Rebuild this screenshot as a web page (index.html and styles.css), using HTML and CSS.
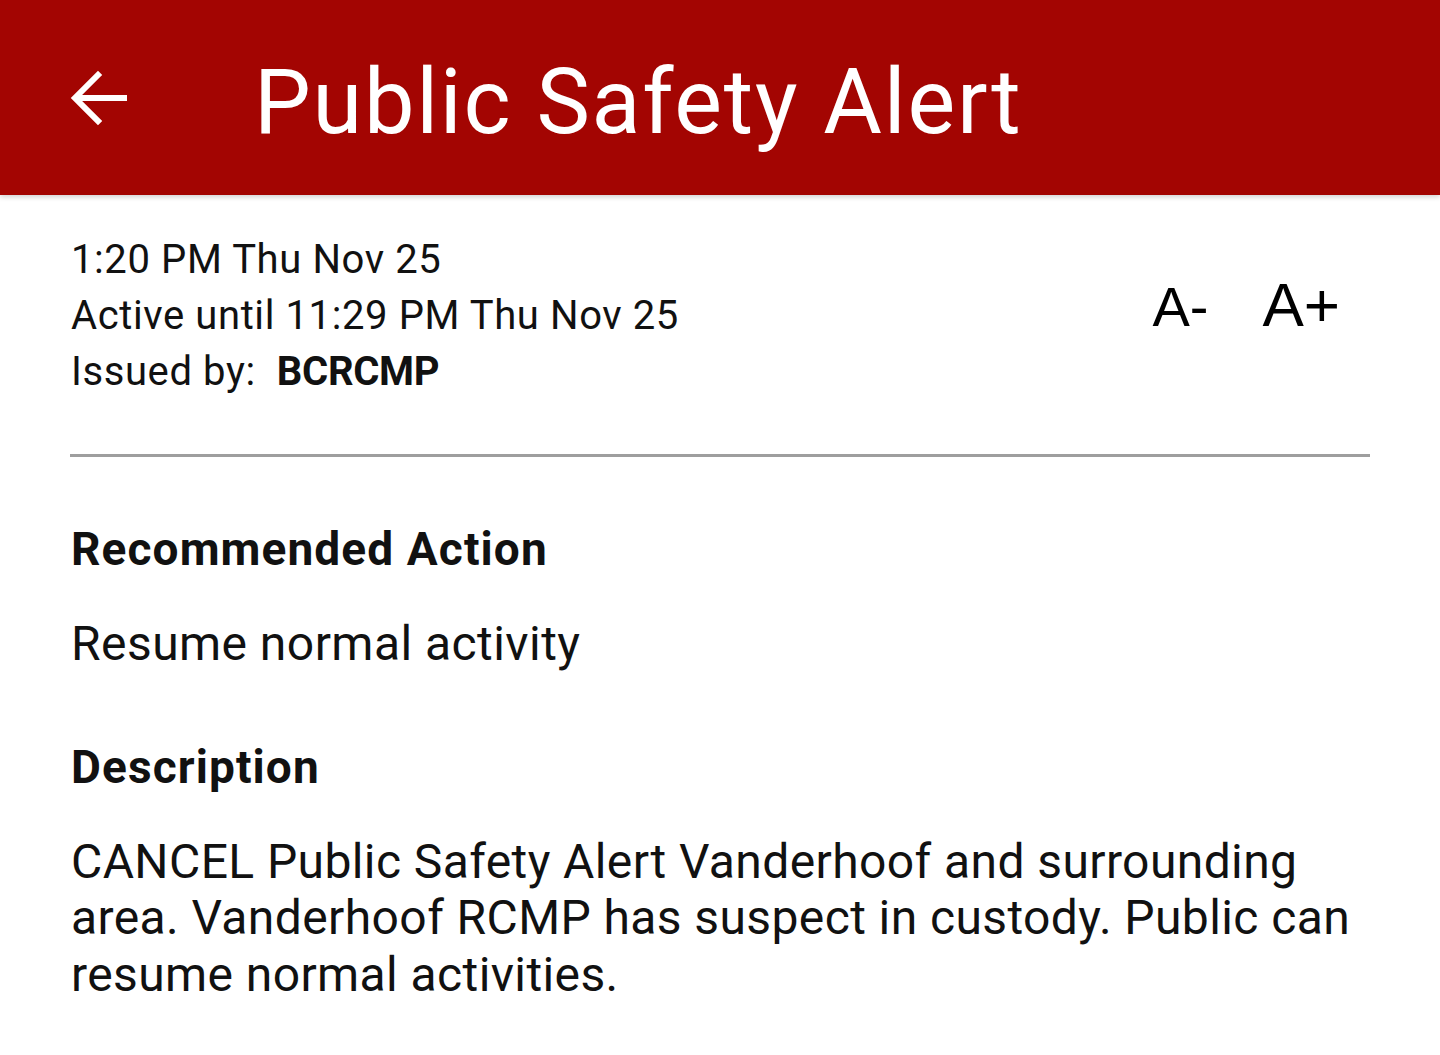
FILE: index.html
```html
<!DOCTYPE html>
<html lang="en">
<head>
<meta charset="utf-8">
<title>Public Safety Alert</title>
<link rel="stylesheet" href="styles.css">
</head>
<body>
<header class="appbar">
  <button class="back" aria-label="Back">
    <svg width="60" height="60" viewBox="0 0 60 60" fill="none" stroke="#fff" stroke-width="6" stroke-linecap="square" stroke-linejoin="miter">
      <path d="M54 29 H8"/>
      <path d="M28 6 L5 29 L28 52"/>
    </svg>
  </button>
  <h1 class="title">Public Safety Alert</h1>
</header>
<main class="content">
  <section class="meta">
    <div class="meta-lines">
      <div class="line">1:20 PM Thu Nov 25</div>
      <div class="line">Active until 11:29 PM Thu Nov 25</div>
      <div class="line">Issued by:&nbsp; <b class="issuer">BCRCMP</b></div>
    </div>
    <div class="size-ctrl">
      <span class="a-minus">A-</span>
      <span class="a-plus">A+</span>
    </div>
  </section>
  <hr class="divider">
  <h2 class="heading heading-first">Recommended Action</h2>
  <p class="body-text">Resume normal activity</p>
  <h2 class="heading">Description</h2>
  <p class="body-text desc">CANCEL Public Safety Alert Vanderhoof and surrounding area. Vanderhoof RCMP has suspect in custody. Public can resume normal activities.</p>
</main>
</body>
</html>
```
FILE: styles.css
```css
* { box-sizing: border-box; }
html, body { margin: 0; padding: 0; background: #fff; }
body {
  font-family: Roboto, "Noto Sans", "Liberation Sans", sans-serif;
  color: #000;
  width: 1440px;
  height: 1055px;
  overflow: hidden;
}
.appbar {
  height: 195px;
  background: #a30502;
  display: flex;
  align-items: center;
  box-shadow: 0 2px 5px rgba(0,0,0,0.18);
  position: relative;
  z-index: 1;
}
.back {
  background: none;
  border: 0;
  padding: 0;
  margin-left: 70px;
  width: 60px;
  height: 60px;
  display: flex;
  margin-top: 2px;
}
.title {
  margin: 10px 0 0 124px;
  color: #fff;
  font-weight: 400;
  font-size: 90px;
  letter-spacing: 1.75px;
  line-height: 1;
}
.content {
  padding: 37px 70px 0 71px;
}
.meta {
  display: flex;
  justify-content: space-between;
  align-items: center;
}
.meta-lines .line {
  font-size: 40px;
  line-height: 56px;
  letter-spacing: 0.6px;
  color: #111;
}
.issuer { font-weight: 700; letter-spacing: -0.3px; }
.size-ctrl {
  display: flex;
  align-items: baseline;
  gap: 54px;
  margin-right: 30px;
  margin-top: -24px;
  font-family: "Liberation Sans", Arial, sans-serif;
}
.a-minus { font-size: 56px; }
.a-plus { font-size: 62px; }
.divider {
  border: 0;
  height: 3px;
  background: #9e9e9e;
  margin: 54px 0 0 -1px;
}
.heading {
  margin: 0;
  font-size: 46px;
  font-weight: 700;
  line-height: 60px;
  letter-spacing: 1.1px;
  color: #111;
}
.heading-first { margin-top: 62px; }
.body-text {
  margin: 37px 0 0;
  font-size: 48px;
  line-height: 56.5px;
  letter-spacing: 0.45px;
  color: #111;
}
.body-text + .heading { margin-top: 64px; }
.desc { margin-top: 37px; letter-spacing: 0.4px; }
```
